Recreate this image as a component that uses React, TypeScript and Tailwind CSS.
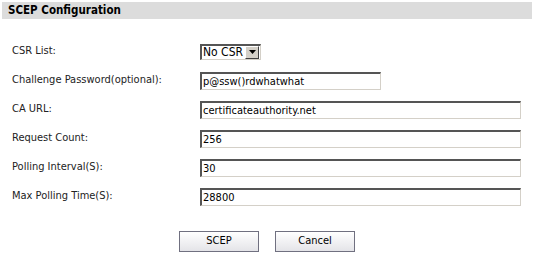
import React, {useState} from 'react';

const rows = [
    {label: 'Challenge Password(optional):', value: 'p@ssw()rdwhatwhat', width: 'w-[181px]'},
    {label: 'CA URL:', value: 'certificateauthority.net', width: 'w-[321px]'},
    {label: 'Request Count:', value: '256', width: 'w-[321px]'},
    {label: 'Polling Interval(S):', value: '30', width: 'w-[321px]'},
    {label: 'Max Polling Time(S):', value: '28800', width: 'w-[321px]'},
];

const inputCls = "h-[18px] border-t-2 border-l-2 border-r border-b border-t-[#555] border-l-[#555] border-r-[#d4d0c8] border-b-[#d4d0c8] bg-white px-[1px] text-[11px] text-black outline-none";

const App = () => {
    const [csr, setCsr] = useState('No CSR');
    const [values, setValues] = useState(rows.map(r => r.value));

    return (
        <div className="w-[534px] h-[261px] bg-white pt-[2px] font-['DejaVu_Sans_Condensed',sans-serif] text-[11px] text-[#222]">
            <div className="mx-[2px] h-[17px] bg-[#dcdcdc] pl-[6px] flex items-center">
                <h1 className="text-[11.5px] font-bold text-black">SCEP Configuration</h1>
            </div>
            <div className="mt-[18px] pl-[12px] flex flex-col">
                <div className="flex h-[29px] items-center">
                    <label className="w-[188px]">CSR List:</label>
                    <div className="flex h-[16px] w-[61px] items-center border-t-2 border-l-2 border-r border-b border-t-[#555] border-l-[#555] border-r-[#d4d0c8] border-b-[#d4d0c8] bg-white">
                        <span className="flex-1 pl-[1px] text-[12px] text-black leading-none">{csr}</span>
                        <button
                            onClick={() => setCsr(csr)}
                            className="flex h-[13px] w-[14px] items-center justify-center border border-t-white border-l-white border-r-[#404040] border-b-[#404040] bg-[#d4d0c8] mr-[1px]">
                            <svg width="7" height="4" viewBox="0 0 7 4">
                                <path d="M0 0h7L3.5 4z" fill="#000"/>
                            </svg>
                        </button>
                    </div>
                </div>
                {rows.map((r, i) => (
                    <div key={r.label} className="flex h-[29px] items-center">
                        <label className="w-[188px]">{r.label}</label>
                        <input
                            className={`${inputCls} ${r.width}`}
                            value={values[i]}
                            onChange={(e) => {
                                const next = [...values];
                                next[i] = e.target.value;
                                setValues(next);
                            }}/>
                    </div>
                ))}
            </div>
            <div className="mt-[20px] flex justify-center gap-[16px]">
                <button className="h-[21px] w-[80px] border border-[#707080] bg-gradient-to-b from-white to-[#e4e4e8] text-[11px] text-black">
                    SCEP
                </button>
                <button className="h-[21px] w-[80px] border border-[#707080] bg-gradient-to-b from-white to-[#e4e4e8] text-[11px] text-black">
                    Cancel
                </button>
            </div>
        </div>
    );
};

export default App;
